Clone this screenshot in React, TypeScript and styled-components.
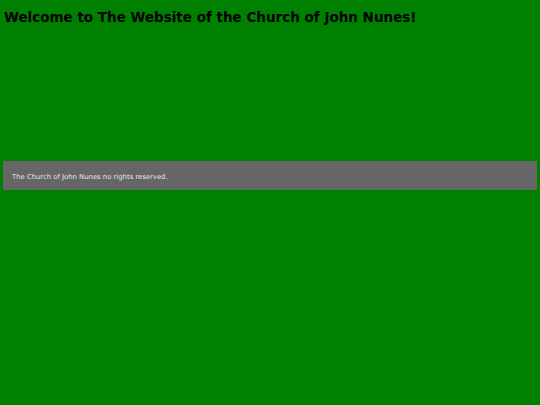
import React from "react";
import styled, { createGlobalStyle } from "styled-components";

const Global = createGlobalStyle`
  html, body { margin: 0; padding: 0; background: #008000; }
  body { font-family: "DejaVu Sans", Verdana, sans-serif; }
`;

const Page = styled.div`
  padding: 0 3.3px;
`;

const Title = styled.h1`
  margin: 0;
  padding: 9px 0.7px 0;
  height: 160.8px;
  box-sizing: border-box;
  font-size: 13.5px;
  font-weight: bold;
  color: #000;
  line-height: 16px;
`;

const Footer = styled.footer`
  background: #666666;
  height: 29.6px;
  display: flex;
  align-items: center;
  padding: 2px 8.7px 0;
  box-sizing: border-box;
  color: #e6e6e6;
  font-size: 6.85px;
`;

export default function App() {
  return (
    <>
      <Global />
      <Page>
        <Title>Welcome to The Website of the Church of John Nunes!</Title>
        <Footer>The Church of John Nunes no rights reserved.</Footer>
      </Page>
    </>
  );
}
